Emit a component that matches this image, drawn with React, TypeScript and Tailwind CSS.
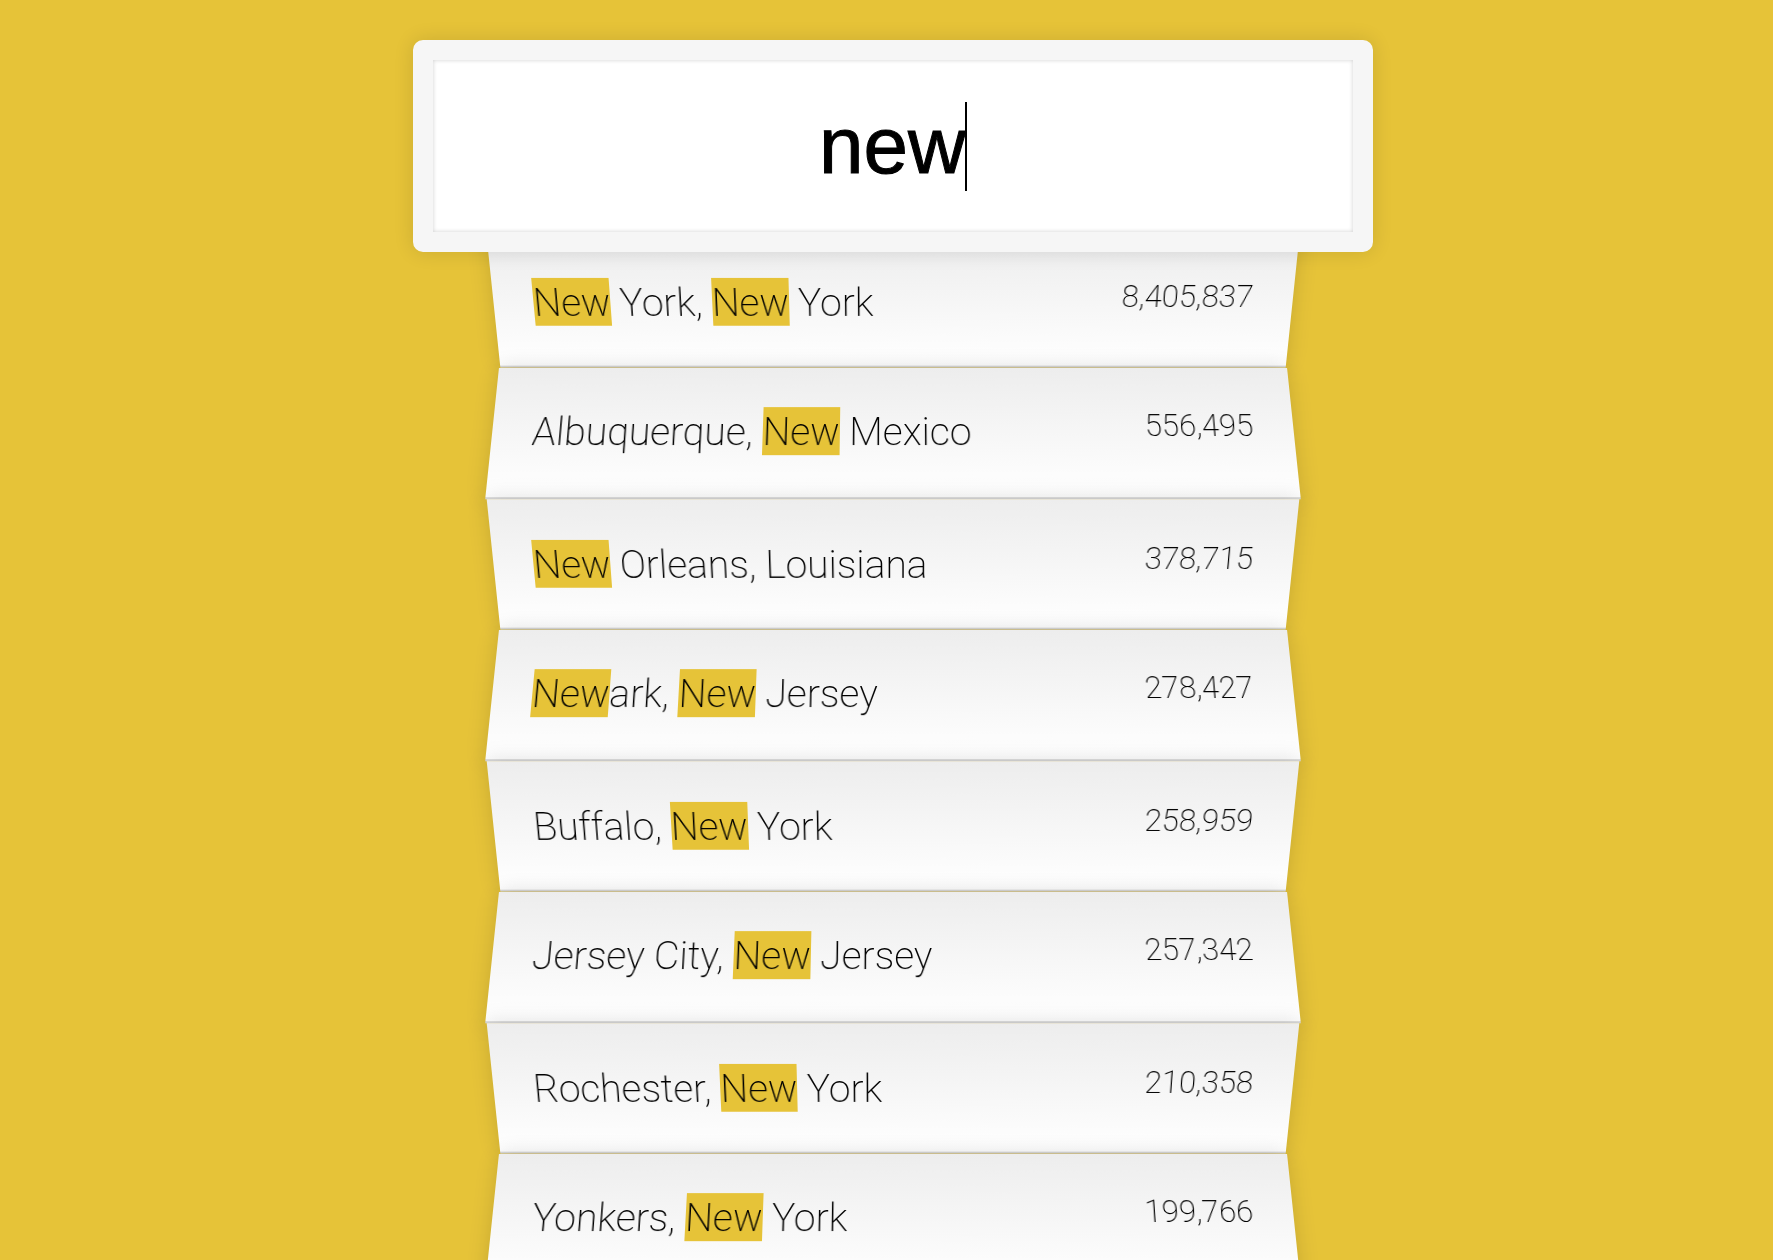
const cities = [
  { name: 'New York, New York', population: '8,405,837' },
  { name: 'Albuquerque, New Mexico', population: '556,495' },
  { name: 'New Orleans, Louisiana', population: '378,715' },
  { name: 'Newark, New Jersey', population: '278,427' },
  { name: 'Buffalo, New York', population: '258,959' },
  { name: 'Jersey City, New Jersey', population: '257,342' },
  { name: 'Rochester, New York', population: '210,358' },
  { name: 'Yonkers, New York', population: '199,766' },
];

function Highlighted({ text }: { text: string }) {
  return (
    <span>
      {text.split(/(New)/).map((part, i) =>
        part === 'New' ? (
          <mark key={i} className="bg-[#e6c338] pt-0.5 text-inherit">{part}</mark>
        ) : (
          part
        ),
      )}
    </span>
  );
}

export default function App() {
  return (
    <main className="h-screen overflow-hidden bg-[#e6c338] pt-10 pl-3 font-[Roboto,'Helvetica_Neue','Liberation_Sans',sans-serif] font-extralight text-black">
      <form className="mx-auto w-full max-w-[800px]" onSubmit={(e) => e.preventDefault()}>
        <div className="relative z-10 -mx-20 rounded-[10px] border-[20px] border-[#f6f6f6] bg-white shadow-[0_0_20px_rgba(0,0,0,0.12),inset_0_0_4px_rgba(0,0,0,0.19)]">
          <input
            type="text"
            aria-label="City or State"
            defaultValue="new"
            className="block h-[172px] w-full bg-transparent text-center font-['Liberation_Sans',Arial,sans-serif] text-[80px] font-normal caret-transparent outline-none [-webkit-text-stroke:1px_black]"
          />
          {/* Text cursor resting after the typed word */}
          <div aria-hidden="true" className="pointer-events-none absolute inset-0 flex items-center justify-center">
            <span className="h-[89px] w-[148px] border-r-2 border-black" />
          </div>
        </div>
        <ul className="-mt-5">
          {cities.map((city) => (
            <li
              key={city.name}
              className="flex justify-between border-b-2 border-[#d8d8d8] bg-linear-to-t from-white to-[#ededed] px-10 pt-10 pb-[39px] text-[39px] leading-[50px] shadow-[0_0_20px_rgba(0,0,0,0.14)] odd:[transform:perspective(200px)_rotateX(-3deg)_translateY(6px)] even:[transform:perspective(200px)_rotateX(3deg)_translateY(4px)_scale(1.001)]"
            >
              <Highlighted text={city.name} />
              <span className="text-[31px] leading-[38px]">{city.population}</span>
            </li>
          ))}
        </ul>
      </form>
    </main>
  );
}
